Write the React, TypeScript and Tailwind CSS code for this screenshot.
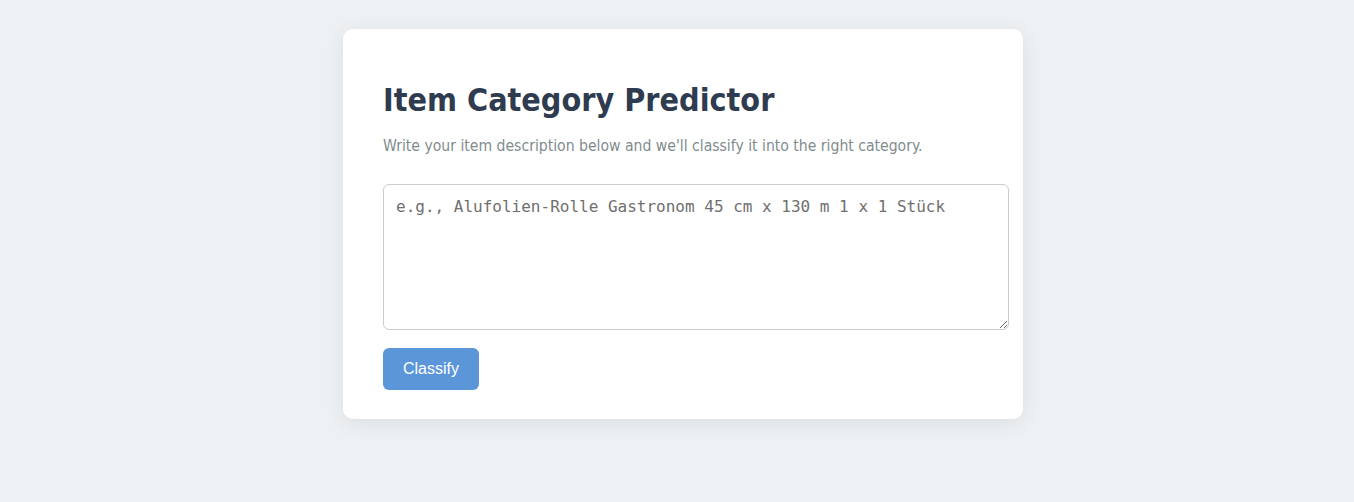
import React from "react";

export default function App() {
  return (
    <div className="flex min-h-[502px] w-full justify-center bg-[#edf1f4] pt-[29px] pl-[12px]">
      <div className="h-fit w-[680px] rounded-[10px] bg-white px-[40px] pt-[40px] pb-[29px] shadow-[0_4px_20px_rgba(0,0,0,0.08)]">
        <h1 className="mt-[11px] font-['DejaVu_Sans_Condensed','DejaVu_Sans',sans-serif] text-[32px] font-bold leading-[40px] text-[#2f3b4f]">
          Item Category Predictor
        </h1>
        <p className="mt-[14px] font-['DejaVu_Sans_Condensed','DejaVu_Sans',sans-serif] text-[15.6px] leading-[24px] text-[#7f8c8d]">
          Write your item description below and we'll classify it into the right category.
        </p>
        <div className="mt-[26px] flex flex-col items-start gap-[18px]">
          <textarea
            className="box-content block h-[120px] w-[600px] rounded-[6px] border border-[#cccccc] bg-white px-[12px] pt-[10px] pb-[14px] font-['DejaVu_Sans_Mono',monospace] text-[16px] text-[#333] placeholder:text-[#6f6f6f]"
            placeholder="e.g., Alufolien-Rolle Gastronom 45 cm x 130 m 1 x 1 Stück"
          />
          <button className="h-[42px] rounded-[6px] bg-[#5b96d9] px-[20px] font-['Liberation_Sans',Arial,sans-serif] text-[16px] text-white">
            Classify
          </button>
        </div>
      </div>
    </div>
  );
}
